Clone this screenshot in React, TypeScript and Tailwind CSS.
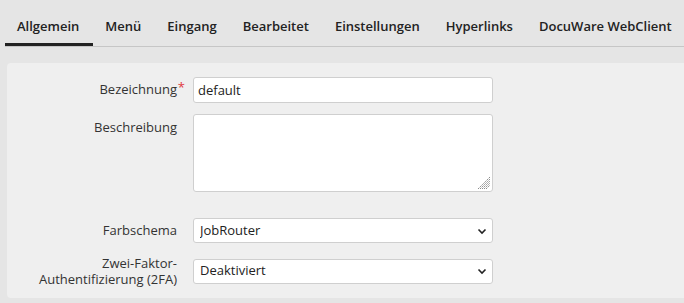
import React from 'react';

const tabs = [
  'Allgemein',
  'Menü',
  'Eingang',
  'Bearbeitet',
  'Einstellungen',
  'Hyperlinks',
  'DocuWare WebClient',
];

function Chevron() {
  return (
    <svg
      className="pointer-events-none absolute right-[6px] top-1/2 h-[8px] w-[10px] -translate-y-1/2"
      viewBox="0 0 10 8"
      fill="none"
    >
      <path d="M1.5 2.5 5 6l3.5-3.5" stroke="#222" strokeWidth="1.6" />
    </svg>
  );
}

function SelectField({ value }: { value: string }) {
  return (
    <div className="relative w-[300px]">
      <select
        defaultValue={value}
        className="h-[25px] w-full appearance-none rounded-[3px] border border-[#cfcfcf] bg-white pl-[6px] pr-6 text-[13px] text-[#222] outline-none"
      >
        <option>{value}</option>
      </select>
      <Chevron />
    </div>
  );
}

export default function App() {
  return (
    <div
      className="min-h-[303px] w-[684px] overflow-hidden bg-[#e5e5e5] text-[13px] text-[#333]"
      style={{ fontFamily: '"Open Sans", "Liberation Sans", sans-serif' }}
    >
      {/* Tab bar */}
      <div className="ml-[5px] flex border-b border-[#c6c6c6]">
        {tabs.map((t, i) => (
          <div
            key={t}
            className={`h-[46px] shrink-0 whitespace-nowrap pt-[16px] pl-[12px] pr-[14px] font-semibold leading-[20px] text-[#222] border-b-[3px] ${
              i === 0 ? 'border-[#222]' : 'border-transparent'
            }`}
          >
            {t}
          </div>
        ))}
      </div>

      {/* Form panel */}
      <div className="ml-[7px] mt-[16px] rounded-l-[4px] bg-[#efefef] pt-[14px] pb-[11px]">
        <div className="flex items-center">
          <label className="relative w-[179px] pr-[9px] text-right">
            Bezeichnung
            <span className="absolute right-[1px] top-[-2px] text-[#e0383e]">*</span>
          </label>
          <input
            defaultValue="default"
            className="ml-[7px] h-[26px] w-[300px] rounded-[3px] border border-[#cfcfcf] bg-white px-[4px] text-[13px] text-[#222] outline-none"
          />
        </div>

        <div className="mt-[11px] flex items-start">
          <label className="w-[179px] pr-[9px] pt-[4px] text-right">Beschreibung</label>
          <div className="relative ml-[7px]">
            <textarea className="block h-[78px] w-[300px] resize-none rounded-[3px] border border-[#cfcfcf] bg-white px-[4px] text-[13px] text-[#222] outline-none" />
            <svg
              className="pointer-events-none absolute bottom-[2px] right-[2px] h-[14px] w-[14px]"
              viewBox="0 0 14 14"
              fill="none"
              stroke="#8a8a8a"
              strokeWidth="1"
              strokeDasharray="2 1"
            >
              <path d="M1 13 13 1" />
              <path d="M5 13 13 5" />
              <path d="M9 13 13 9" />
              <path d="M3 13 13 3" />
              <path d="M7 13 13 7" />
            </svg>
          </div>
        </div>

        <div className="mt-[26px] flex items-center">
          <label className="w-[179px] pr-[9px] text-right">Farbschema</label>
          <div className="ml-[7px]">
            <SelectField value="JobRouter" />
          </div>
        </div>

        <div className="mt-[12px] flex items-center">
          <label className="w-[179px] pr-[9px] text-right leading-[16px]">
            Zwei-Faktor-Authentifizierung (2FA)
          </label>
          <div className="ml-[7px]">
            <SelectField value="Deaktiviert" />
          </div>
        </div>
      </div>
    </div>
  );
}
